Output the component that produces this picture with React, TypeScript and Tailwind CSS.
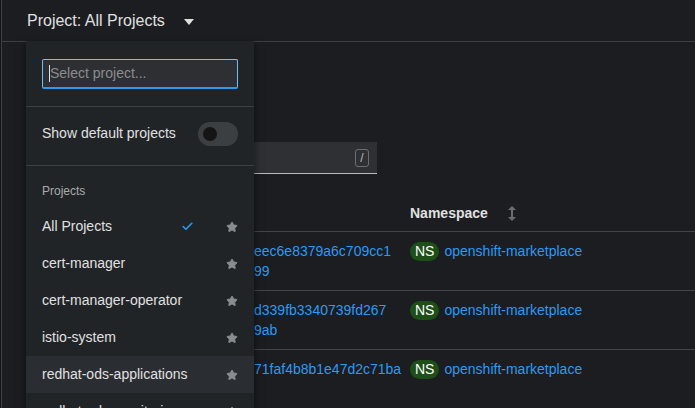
import React from 'react';
import { Check, Star } from 'lucide-react';

const projects = [
  { name: 'All Projects', selected: true },
  { name: 'cert-manager' },
  { name: 'cert-manager-operator' },
  { name: 'istio-system' },
  { name: 'redhat-ods-applications', hover: true },
  { name: 'redhat-ods-monitoring' },
];

const rows = [
  { hash: ['eec6e8379a6c709cc1', '99'], ns: 'openshift-marketplace' },
  { hash: ['d339fb3340739fd267', '9ab'], ns: 'openshift-marketplace' },
  { hash: ['71faf4b8b1e47d2c71ba'], ns: 'openshift-marketplace' },
];

const CaretDown = () => (
  <svg width="10" height="6" viewBox="0 0 10 6" className="fill-[#e0e0e0]">
    <path d="M0 0h10L5 6z" />
  </svg>
);

const SortIcon = () => (
  <svg width="8" height="15" viewBox="0 0 8 15" className="fill-[#6a6e73]">
    <path d="M4 0L8 4H5v7h3l-4 4-4-4h3V4H0z" />
  </svg>
);

export default function App() {
  return (
    <div className="relative w-[695px] h-[408px] overflow-hidden bg-[#151515] pl-px font-['Liberation_Sans',Arial,sans-serif]">
      <div className="h-full bg-[#1b1d21] border-l border-[#3c3f42]">
        {/* Top bar */}
        <div className="h-[42px] flex items-center pl-[25px] border-b border-[#3c3f42]">
          <span className="text-[16px] text-[#e0e0e0]">Project: All Projects</span>
          <span className="ml-[19px] mt-[2px]">
            <CaretDown />
          </span>
        </div>

        {/* Content */}
        <div className="pl-[40px]">
          <div className="h-[132px] flex items-end">
            <div className="w-[335px] h-[32px] bg-[#2e3034] border-b border-[#b8bbbe] flex items-center justify-end pr-[8px]">
              <span className="w-[14px] h-[18px] rounded-[3px] border border-[#6a6e73] text-[#b8bbbe] text-[12px] flex items-center justify-center">
                /
              </span>
            </div>
          </div>

          {/* Table */}
          <div className="mt-[21px]">
            <div className="h-[37px] flex items-center border-b border-[#444548]">
              <div className="w-[368px]" />
              <span className="text-[14px] font-bold text-[#e0e0e0]">Namespace</span>
              <span className="ml-[20px] mt-[1px]">
                <SortIcon />
              </span>
            </div>
            {rows.map((row, i) => (
              <div key={i} className="h-[59px] flex items-start pt-[9px] border-b border-[#444548]">
                <div className="w-[368px] pl-[212px] text-[14px] leading-[20px] text-[#2b9af3]">
                  {row.hash.map((l, j) => (
                    <div key={j} className="whitespace-nowrap">{l}</div>
                  ))}
                </div>
                <div className="flex items-center h-[20px]">
                  <span className="h-[19px] px-[5px] rounded-full bg-[#1e4f18] text-white text-[14px] leading-[19px]">
                    NS
                  </span>
                  <span className="ml-[5px] text-[14px] text-[#2b9af3]">{row.ns}</span>
                </div>
              </div>
            ))}
          </div>
        </div>
      </div>

      {/* Project dropdown menu */}
      <div className="absolute left-[26px] top-[41px] w-[228px] h-[380px] bg-[#212427] shadow-[0_4px_8px_rgba(0,0,0,0.6)]">
        <div className="px-[16px] pt-[18px] pb-[17px] border-b border-[#3c3f42]">
          <div className="h-[30px] bg-[#2d2f33] border border-[#73bcf7] border-b-2 border-b-[#2b9af3] rounded-[2px] flex items-center pl-[6px]">
            <span className="w-px h-[17px] bg-[#e0e0e0]" />
            <span className="text-[14px] text-[#8a8d90]">Select project...</span>
          </div>
        </div>
        <div className="h-[59px] px-[16px] pb-[5px] flex items-center justify-between border-b border-[#3c3f42]">
          <span className="text-[14px] text-[#e0e0e0]">Show default projects</span>
          <span className="w-[40px] h-[24px] rounded-full bg-[#3c3f42] flex items-center pl-[5px]">
            <span className="w-[14px] h-[14px] rounded-full bg-[#151515]" />
          </span>
        </div>
        <div className="pt-[18px]">
          <div className="px-[16px] text-[12px] text-[#aaabac] h-[15px] leading-[15px]">Projects</div>
          <div className="mt-[9px]">
            {projects.map((p) => (
              <div
                key={p.name}
                className={`h-[37px] pl-[16px] pr-[16px] flex items-center ${p.hover ? 'bg-[#2a2d31]' : ''}`}
              >
                <span className="flex-1 text-[14px] text-[#e0e0e0]">{p.name}</span>
                {p.selected && <Check className="w-[13px] h-[13px] text-[#2b9af3] mr-[32px]" strokeWidth={3} />}
                <Star className="w-[12px] h-[12px] text-[#8a8d90] fill-[#8a8d90]" />
              </div>
            ))}
          </div>
        </div>
      </div>
    </div>
  );
}
